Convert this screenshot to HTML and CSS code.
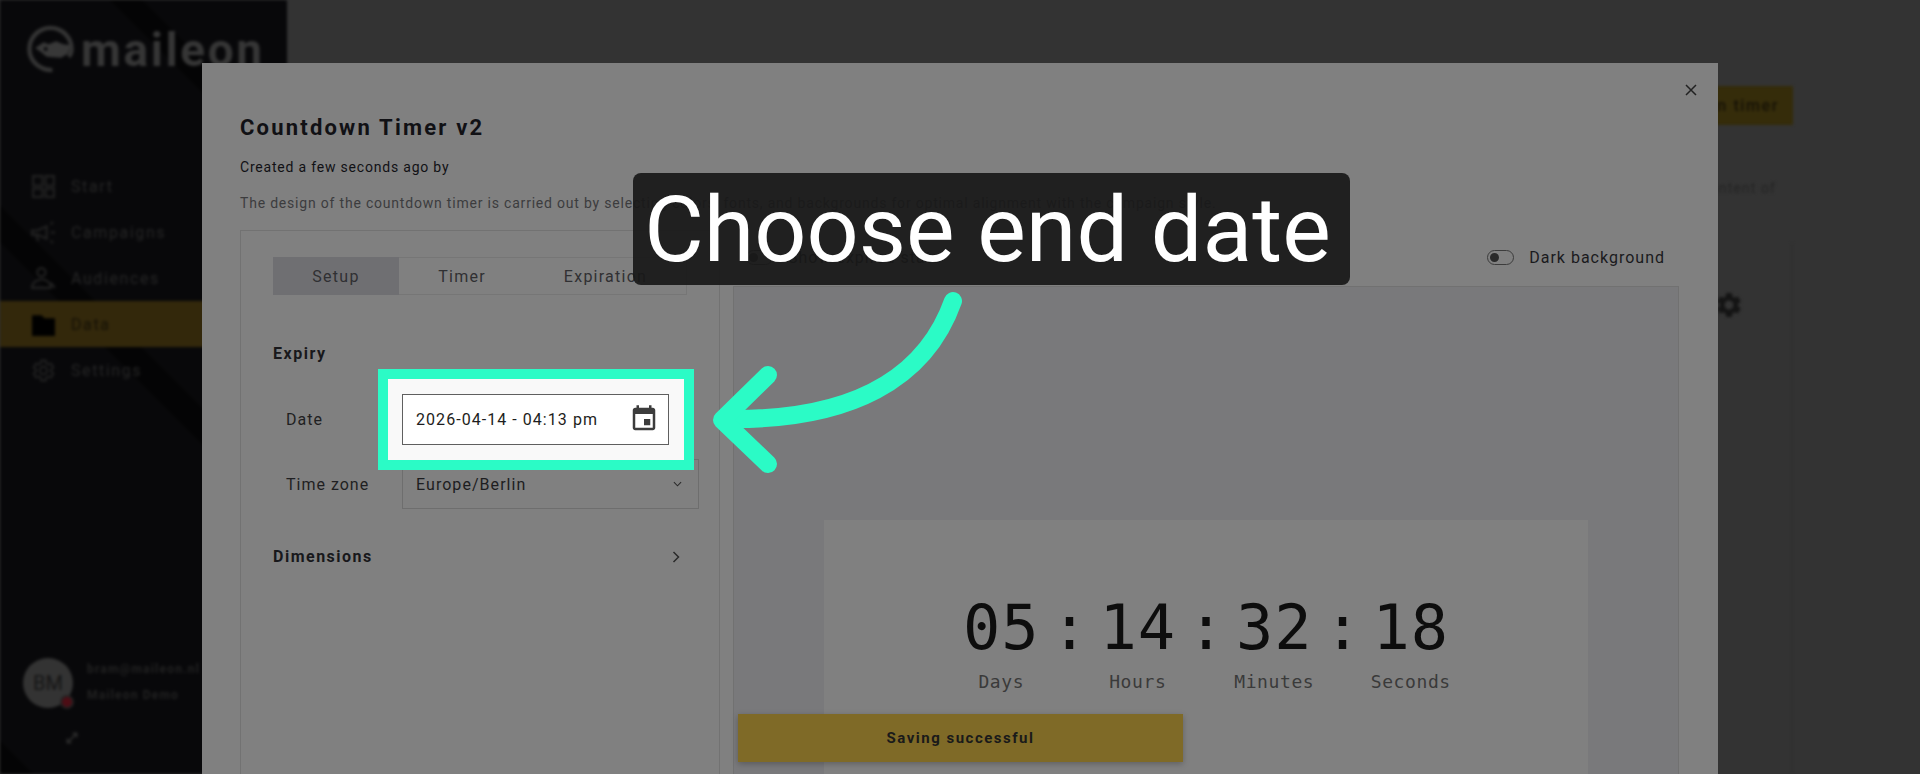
FILE: index.html
```html
<!DOCTYPE html>
<html lang="en">
<head>
<meta charset="utf-8">
<title>Countdown Timer v2</title>
<link rel="stylesheet" href="styles.css">
</head>
<body>
<div class="app">
  <aside class="sidebar">
    <div class="logo">
      <svg class="logo-mark" viewBox="0 0 50 50"><path d="M27 47C13 47 3 37 3 25S13 3 25 3s22 10 22 22c0 3-1 6-3 8" fill="none" stroke="#343434" stroke-width="4.500"/><path d="M9 24l9-6 5 2 8-3 7 3 8 1-3 9-7 4-15-1-6-5z" fill="#383838"/><circle cx="20" cy="25" r="2" fill="#08080a"/></svg>
      <span class="logo-text">maileon</span>
    </div>
    <nav class="nav">
      <a class="nav-item"><svg class="nav-icon" viewBox="0 0 24 24"><path d="M2 2h9v9H2zM14 2h8v9h-8zM2 14h9v8H2zM14 14h8v8h-8z" fill="none" stroke="#222" stroke-width="2"/></svg>Start</a>
      <a class="nav-item"><svg class="nav-icon" viewBox="0 0 24 24"><path d="M1 10h5l9-4v12l-9-4H1zM5 14l2 6M19 4l2-2M19 12h4M19 20l2 2" fill="none" stroke="#222" stroke-width="2"/></svg>Campaigns</a>
      <a class="nav-item"><svg class="nav-icon" viewBox="0 0 24 24"><circle cx="10" cy="6" r="4" fill="none" stroke="#222" stroke-width="2"/><path d="M1 21c0-5 4-8 9-8s9 3 9 8zM19 16l4 5" fill="none" stroke="#222" stroke-width="2"/></svg>Audiences</a>
      <a class="nav-item nav-item-active"><svg class="nav-icon" viewBox="0 0 24 24"><path d="M1 3h9l3 3h10v17H1z" fill="#000"/></svg>Data</a>
      <a class="nav-item"><svg class="nav-icon" viewBox="0 0 24 24"><path d="M19.140 12.940c.04-.3.06-.61.06-.94 0-.32-.02-.64-.07-.94l2.030-1.580c.18-.14.23-.41.12-.61l-1.920-3.320c-.12-.22-.37-.29-.59-.22l-2.390.96c-.5-.38-1.030-.7-1.620-.94L14.400 2.810c-.04-.24-.24-.41-.48-.41h-3.840c-.24 0-.43.17-.47.41L9.250 5.350c-.59.24-1.130.57-1.620.94l-2.390-.96c-.22-.08-.47 0-.59.22L2.740 8.870c-.12.21-.08.47.12.61l2.030 1.580c-.05.3-.09.63-.09.94s.02.64.07.94l-2.030 1.580c-.18.14-.23.41-.12.61l1.920 3.320c.12.22.37.29.59.22l2.390-.96c.5.38 1.030.7 1.620.94l.36 2.540c.05.24.24.41.48.41h3.840c.24 0 .44-.17.47-.41l.36-2.540c.59-.24 1.130-.56 1.620-.94l2.390.96c.22.08.47 0 .59-.22l1.920-3.320c.12-.22.07-.47-.12-.61l-2.010-1.580zM12 15.600c-1.980 0-3.600-1.620-3.600-3.600s1.620-3.600 3.600-3.600 3.600 1.620 3.600 3.600-1.620 3.600-3.600 3.600z" fill="none" stroke="#222" stroke-width="1.800"/></svg>Settings</a>
    </nav>
    <div class="user">
      <div class="avatar">BM<span class="avatar-badge"></span></div>
      <div class="user-info">
        <span>bram@maileon.nl</span>
        <span>Maileon Demo</span>
      </div>
    </div>
    <svg class="expand-icon" viewBox="0 0 24 24"><path d="M4 20l16-16M13 4h7v7M4 13v7h7" fill="none" stroke="#2c2c2c" stroke-width="3"/></svg>
  </aside>
  <main class="main">
    <div class="main-head"><button class="main-button">Create countdown timer</button></div>
    <p class="main-text">Manage the content of</p>
    <div class="main-card"><svg class="gear" viewBox="0 0 24 24"><path d="M19.140 12.940c.04-.3.06-.61.06-.94 0-.32-.02-.64-.07-.94l2.030-1.580c.18-.14.23-.41.12-.61l-1.920-3.320c-.12-.22-.37-.29-.59-.22l-2.390.96c-.5-.38-1.030-.7-1.620-.94L14.400 2.810c-.04-.24-.24-.41-.48-.41h-3.840c-.24 0-.43.17-.47.41L9.250 5.350c-.59.24-1.130.57-1.620.94l-2.390-.96c-.22-.08-.47 0-.59.22L2.740 8.870c-.12.21-.08.47.12.61l2.030 1.580c-.05.3-.09.63-.09.94s.02.64.07.94l-2.030 1.580c-.18.14-.23.41-.12.61l1.920 3.320c.12.22.37.29.59.22l2.390-.96c.5.38 1.030.7 1.620.94l.36 2.540c.05.24.24.41.48.41h3.840c.24 0 .44-.17.47-.41l.36-2.540c.59-.24 1.130-.56 1.620-.94l2.390.96c.22.08.47 0 .59-.22l1.920-3.320c.12-.22.07-.47-.12-.61l-2.010-1.580zM12 15.600c-1.980 0-3.600-1.620-3.600-3.600s1.620-3.600 3.600-3.600 3.600 1.620 3.600 3.600-1.620 3.600-3.600 3.600z" fill="#141414"/></svg></div>
  </main>
</div>

<section class="modal">
  <svg class="close-icon" viewBox="0 0 14 14"><path d="M2 2l10 10M12 2L2 12" stroke="#222" stroke-width="1.500" fill="none"/></svg>
  <h1 class="modal-title">Countdown Timer v2</h1>
  <p class="modal-meta">Created a few seconds ago by</p>
  <p class="modal-desc">The design of the countdown timer is carried out by selecting colors, fonts, and backgrounds for optimal alignment with the campaign style.</p>
  <div class="columns">
    <div class="settings">
      <div class="tabs">
        <div class="tab tab-active">Setup</div>
        <div class="tab">Timer</div>
        <div class="tab">Expiration</div>
      </div>
      <h2 class="section-title">Expiry</h2>
      <div class="field">
        <label class="field-label">Date</label>
        <div class="date-wrap">
          <span class="highlight"></span>
          <div class="date-input">
            <span>2026-04-14 - 04:13 pm</span>
            <svg class="calendar" viewBox="0 0 24 24"><path d="M17 12h-5v5h5v-5zM16 1v2H8V1H6v2H5c-1.110 0-1.990.9-1.990 2L3 19c0 1.100.89 2 2 2h14c1.100 0 2-.9 2-2V5c0-1.100-.9-2-2-2h-1V1h-2zm3 18H5V8h14v11z" fill="#3c3c3c"/></svg>
          </div>
        </div>
      </div>
      <div class="field">
        <label class="field-label">Time zone</label>
        <div class="select">
          <span>Europe/Berlin</span>
          <svg class="select-arrow" viewBox="0 0 10 6"><path d="M1 1l4 4 4-4" fill="none" stroke="#2a2a2a" stroke-width="1.200"/></svg>
        </div>
      </div>
      <div class="section-row">
        <h2 class="section-title section-title-flat">Dimensions</h2>
        <svg class="chevron" viewBox="0 0 8 12"><path d="M1.500 1l5 5-5 5" fill="none" stroke="#2a2a2a" stroke-width="1.500"/></svg>
      </div>
    </div>
    <div class="preview-col">
      <div class="preview-head">
        <div class="toggle-group">
          <span class="toggle"><span class="toggle-knob"></span></span>
          <span>Show expired state</span>
        </div>
        <div class="toggle-group">
          <span class="toggle"><span class="toggle-knob"></span></span>
          <span>Dark background</span>
        </div>
      </div>
      <div class="preview">
        <div class="timer-card">
          <div class="timer">
            <div class="unit"><div class="digits">05</div><div class="unit-label">Days</div></div>
            <div class="colon">:</div>
            <div class="unit"><div class="digits">14</div><div class="unit-label">Hours</div></div>
            <div class="colon">:</div>
            <div class="unit"><div class="digits">32</div><div class="unit-label">Minutes</div></div>
            <div class="colon">:</div>
            <div class="unit"><div class="digits">18</div><div class="unit-label">Seconds</div></div>
          </div>
        </div>
      </div>
    </div>
  </div>
  <div class="toast">Saving successful</div>
</section>

<div class="callout">Choose end date</div>
<svg class="arrow" viewBox="0 0 1920 774">
  <path d="M953 301C925 380 850 420 730 419" fill="none" stroke="#2bfbc6" stroke-width="18" stroke-linecap="round"/>
  <path d="M768 375L722 420L768 464" fill="none" stroke="#2bfbc6" stroke-width="18" stroke-linecap="round" stroke-linejoin="round"/>
</svg>
</body>
</html>
```

FILE: styles.css
```css
* { box-sizing: border-box; }
html, body { margin: 0; height: 100%; }
body {
  position: relative;
  height: 774px;
  overflow: hidden;
  background: #333;
  font-family: Roboto, "Liberation Sans", sans-serif;
  color: #1d1d20;
}

/* dimmed, blurred application behind the dialog */
.app {
  display: flex;
  height: 774px;
  filter: blur(1.4px);
}
.sidebar {
  position: relative;
  flex: 0 0 287px;
  display: flex;
  flex-direction: column;
  background:
    linear-gradient(45deg, #040405 0, #040405 24px, transparent 24px),
    linear-gradient(45deg, transparent 376px, #040405 376px, #040405 402px, transparent 402px),
    linear-gradient(45deg, transparent 625px, #040405 625px, #040405 648px, transparent 648px),
    #08080a;
  color: #262626;
}
.logo {
  display: flex;
  align-items: flex-start;
  gap: 5px;
  height: 163px;
  padding: 25px 0 0 25px;
}
.logo-mark { width: 51px; height: 48px; }
.logo-text {
  margin-top: 3px;
  font-size: 46px;
  line-height: 44px;
  font-weight: 700;
  letter-spacing: 2.6px;
  color: #363636;
}
.nav { display: flex; flex-direction: column; }
.nav-item {
  display: flex;
  align-items: center;
  gap: 15px;
  height: 46px;
  padding-left: 31px;
  font-size: 16px;
  letter-spacing: 1.6px;
  color: #262626;
}
.nav-item-active { background: #33280b; color: #141006; }
.nav-icon { width: 25px; height: 25px; }
.user {
  display: flex;
  align-items: center;
  gap: 14px;
  margin-top: auto;
  padding: 0 0 66px 23px;
}
.avatar {
  position: relative;
  flex: none;
  display: flex;
  align-items: center;
  justify-content: center;
  width: 50px;
  height: 50px;
  border-radius: 50%;
  background: #333;
  color: #151515;
  font-size: 20px;
}
.avatar-badge {
  position: absolute;
  right: -1px;
  bottom: -1px;
  width: 14px;
  height: 14px;
  border-radius: 50%;
  background: #4d0d15;
  border: 2px solid #222;
}
.user-info {
  display: flex;
  flex-direction: column;
  gap: 11px;
  margin-top: -2px;
  font-size: 12px;
  line-height: 15px;
  font-weight: 700;
  letter-spacing: 1.2px;
  color: #222;
  white-space: nowrap;
}
.expand-icon {
  position: absolute;
  left: 65px;
  top: 731px;
  width: 14px;
  height: 14px;
}
.main {
  flex: 1;
  min-width: 0;
  padding: 86px 127px 0 0;
}
.main-head { display: flex; justify-content: flex-end; }
.main-button {
  height: 39px;
  padding: 0 14px;
  border: 0;
  background: #352c0a;
  color: #141006;
  font: 500 16px Roboto, sans-serif;
  letter-spacing: 1.6px;
}
.main-text {
  margin: 54px 17px 0 0;
  text-align: right;
  font-size: 14px;
  line-height: 18px;
  letter-spacing: 1.1px;
  color: #232323;
}
.main-card {
  display: flex;
  justify-content: flex-end;
  align-items: flex-start;
  height: 531px;
  margin-top: 46px;
  padding: 47px 47px 0 0;
  border-right: 2px solid #2f2f2f;
}
.gear { width: 30px; height: 30px; }

/* dialog */
.modal {
  position: absolute;
  left: 202px;
  top: 63px;
  width: 1516px;
  height: 711px;
  padding: 53px 39px 0 38px;
  background: #808080;
  overflow: hidden;
}
.close-icon {
  position: absolute;
  right: 20px;
  top: 20px;
  width: 14px;
  height: 14px;
}
.modal-title {
  margin: 0;
  font-size: 22px;
  line-height: 24px;
  font-weight: 700;
  letter-spacing: 2.2px;
  color: #111115;
}
.modal-meta {
  margin: 17px 0 0;
  font-size: 14px;
  line-height: 20px;
  letter-spacing: .8px;
  color: #111115;
}
.modal-desc {
  margin: 16px 0 0;
  font-size: 14px;
  line-height: 20px;
  letter-spacing: .8px;
  color: #3c3c3e;
  white-space: nowrap;
}
.columns {
  display: flex;
  gap: 13px;
  height: 600px;
  margin-top: 17px;
}
.settings {
  flex: 0 0 480px;
  min-width: 0;
  padding: 26px 20px 0 32px;
  border: 1px solid #727272;
  border-bottom: 0;
}
.tabs {
  display: grid;
  grid-template-columns: 126px 126px 1fr;
  height: 38px;
  margin-right: 12px;
  border: 1px solid #767676;
  border-left: 0;
}
.tab {
  display: flex;
  align-items: center;
  justify-content: center;
  font-size: 16px;
  letter-spacing: 1.25px;
  color: #303033;
}
.tab-active { margin: -1px 0; background: #6f6f72; }
.section-title {
  margin: 49px 0 0;
  font-size: 16px;
  line-height: 20px;
  font-weight: 700;
  letter-spacing: 1.5px;
  color: #18181b;
}
.section-title-flat { margin: 0; }
.field {
  display: flex;
  align-items: center;
  margin-top: 14px;
  padding-left: 13px;
}
.section-title + .field { margin-top: 30px; }
.field-label {
  flex: 0 0 116px;
  font-size: 16px;
  letter-spacing: 1px;
  color: #1f1f22;
}
.date-wrap { position: relative; }
.highlight {
  position: absolute;
  left: -24px;
  top: -25px;
  width: 316px;
  height: 101px;
  border: 10px solid #2bfbc6;
  background: #f9f9f9;
}
.date-input {
  position: relative;
  display: flex;
  align-items: center;
  justify-content: space-between;
  width: 267px;
  height: 51px;
  padding: 0 9px 1px 13px;
  background: #fff;
  border: 1px solid #5f5f5f;
  font-size: 16px;
  letter-spacing: 1.05px;
  color: #1d1d20;
}
.calendar { width: 30px; height: 30px; }
.select {
  display: flex;
  align-items: center;
  justify-content: space-between;
  width: 297px;
  height: 50px;
  padding: 0 16px 0 13px;
  border: 1px solid #6e6e6e;
  font-size: 16px;
  letter-spacing: 1.05px;
  color: #1d1d20;
}
.select-arrow { width: 9px; height: 6px; }
.section-row {
  display: flex;
  align-items: center;
  justify-content: space-between;
  margin-top: 38px;
  padding-right: 19px;
}
.chevron { width: 8px; height: 12px; }

.preview-col { flex: 1; min-width: 0; }
.preview-head {
  display: flex;
  align-items: center;
  justify-content: space-between;
  height: 56px;
  padding: 0 14px 2px 13px;
  font-size: 16px;
  letter-spacing: 1px;
  color: #1a1a1d;
}
.toggle-group { display: flex; align-items: center; gap: 15px; }
.toggle {
  display: block;
  width: 27px;
  height: 15px;
  padding: 2px;
  border: 1px solid #3c3c3c;
  border-radius: 8px;
}
.toggle-knob {
  display: block;
  width: 9px;
  height: 9px;
  border-radius: 50%;
  background: #2a2a2a;
}
.preview {
  height: 540px;
  padding: 233px 90px 0;
  background: #79797b;
  border: 1px solid #717171;
}
.timer-card { height: 300px; padding-top: 78px; background: #808080; }
.timer { display: flex; justify-content: center; }
.unit { display: flex; flex-direction: column; align-items: center; width: 72px; }
.digits {
  font-family: "DejaVu Sans Mono", monospace;
  font-size: 62px;
  line-height: 60px;
  letter-spacing: 1px;
  color: #0d0d0d;
  white-space: nowrap;
}
.unit-label {
  margin-top: 13px;
  font-family: "DejaVu Sans Mono", monospace;
  font-size: 18px;
  line-height: 22px;
  letter-spacing: .6px;
  color: #3a3a3a;
  white-space: nowrap;
}
.colon {
  width: 64.5px;
  text-align: center;
  font-family: "DejaVu Sans Mono", monospace;
  font-size: 60px;
  line-height: 60px;
  color: #0d0d0d;
}
.toast {
  position: absolute;
  left: 536px;
  top: 651px;
  display: flex;
  align-items: center;
  justify-content: center;
  width: 445px;
  height: 48px;
  background: #7f6a27;
  box-shadow: 0 2px 6px rgba(0,0,0,.25);
  font-size: 15px;
  font-weight: 700;
  letter-spacing: 1.5px;
  color: #1a1a1a;
}

/* annotation layer */
.callout {
  position: absolute;
  left: 633px;
  top: 173px;
  display: flex;
  align-items: center;
  justify-content: center;
  width: 717px;
  height: 112px;
  padding: 2px 8px 0 0;
  border-radius: 8px;
  background: rgba(24,24,24,.92);
  font-size: 91.6px;
  line-height: 110px;
  color: #fff;
  white-space: nowrap;
}
.arrow {
  position: absolute;
  left: 0;
  top: 0;
  width: 1920px;
  height: 774px;
  pointer-events: none;
}
```
